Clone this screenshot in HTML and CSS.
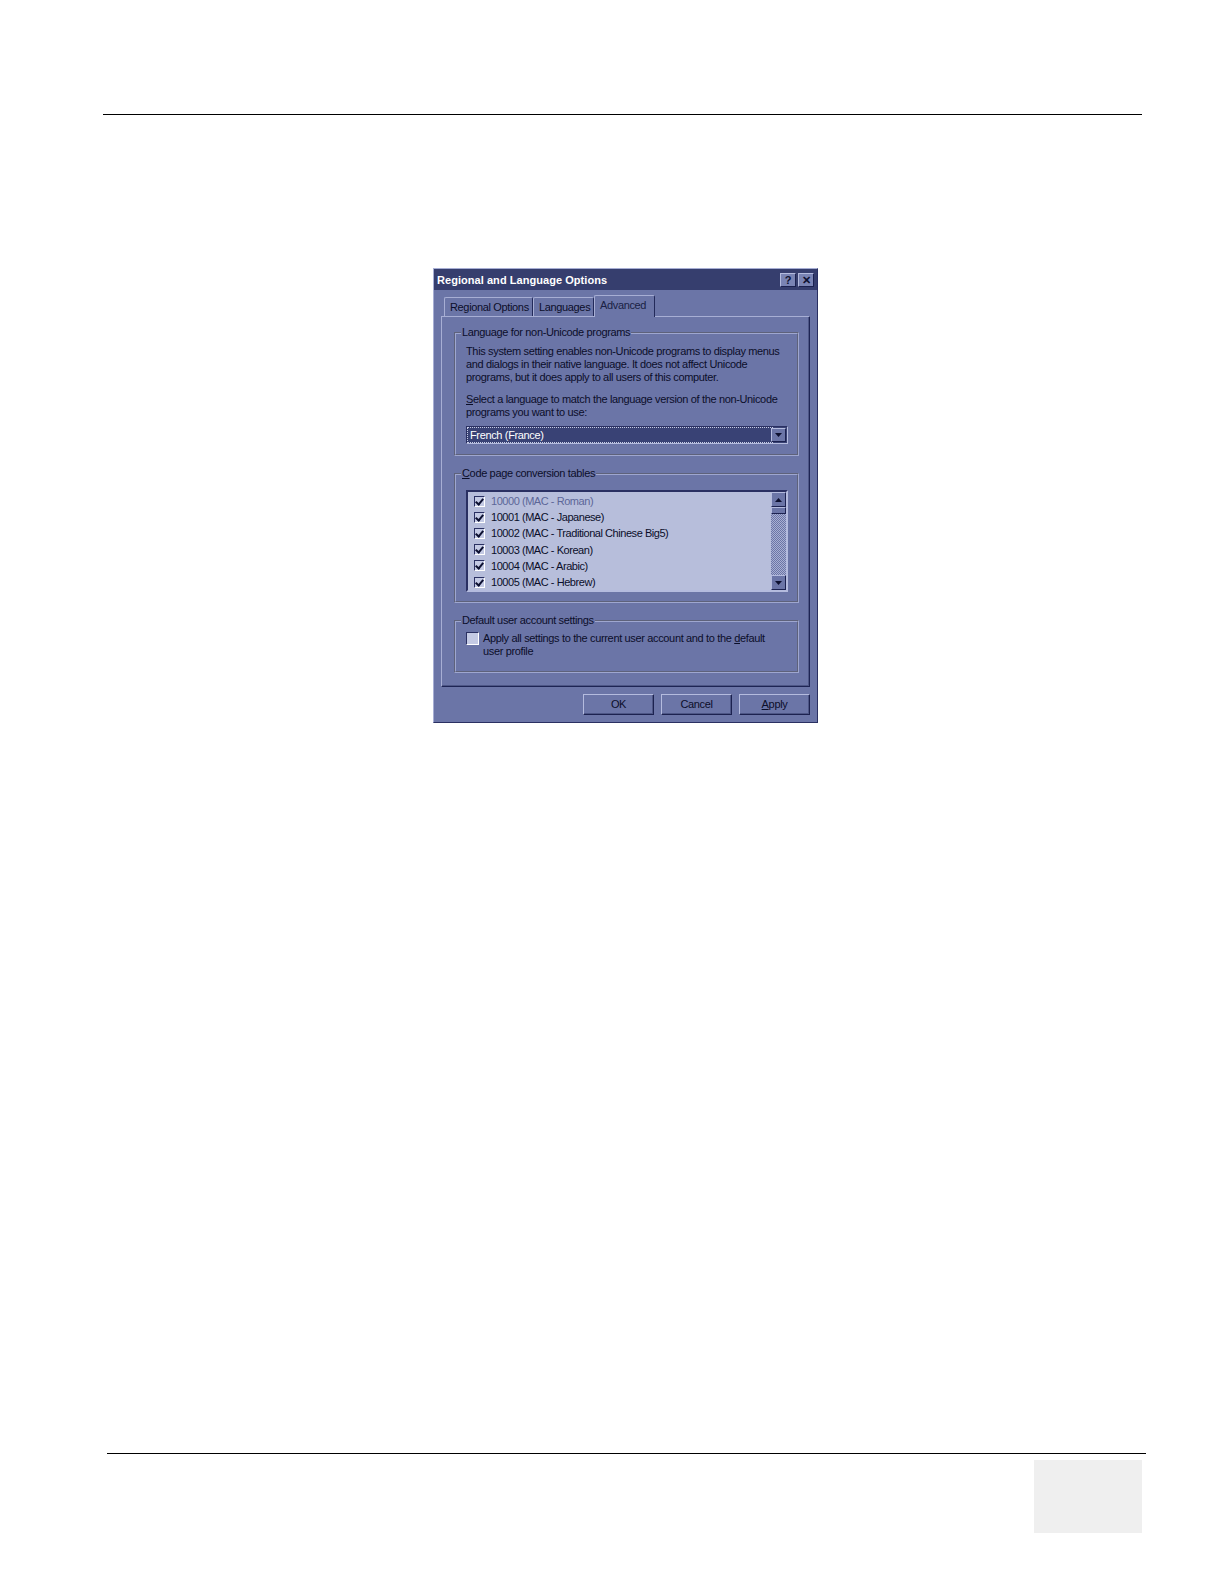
FILE: index.html
```html
<!DOCTYPE html>
<html lang="en">
<head>
    <meta charset="UTF-8">
    <title>Regional and Language Options</title>
    <link rel="stylesheet" href="styles.css">
</head>
<body>
    <div class="page">
        <div class="rule top-rule"></div>

        <!-- Dialog screenshot -->
        <div class="dialog">
            <div class="titlebar">
                <span class="title">Regional and Language Options</span>
                <div class="title-buttons">
                    <span class="tb-btn">?</span>
                    <span class="tb-btn">&#x2715;</span>
                </div>
            </div>

            <div class="tabs">
                <div class="tab tab-regional">Regional Options</div>
                <div class="tab tab-lang">Languages</div>
                <div class="tab tab-adv active">Advanced</div>
            </div>

            <div class="panel">
                <fieldset class="group group-lang">
                    <legend>Language for non-Unicode programs</legend>
                    <p>This system setting enables non-Unicode programs to display menus and dialogs in their native language. It does not affect Unicode programs, but it does apply to all users of this computer.</p>
                    <p class="second">Select a language to match the language version of the non-Unicode programs you want to use:</p>
                    <div class="combo">
                        <div class="combo-value"><span>French (France)</span></div>
                        <div class="combo-btn">
                            <svg width="7" height="4" viewBox="0 0 7 4"><path d="M0 0h7L3.5 4z" fill="#0d1030"/></svg>
                        </div>
                    </div>
                </fieldset>

                <fieldset class="group group-code">
                    <legend class="mnemonic">Code page conversion tables</legend>
                    <div class="list">
                        <div class="list-items">
                            <div class="item dim"><span class="check on"></span>10000 (MAC - Roman)</div>
                            <div class="item"><span class="check on"></span>10001 (MAC - Japanese)</div>
                            <div class="item"><span class="check on"></span>10002 (MAC - Traditional Chinese Big5)</div>
                            <div class="item"><span class="check on"></span>10003 (MAC - Korean)</div>
                            <div class="item"><span class="check on"></span>10004 (MAC - Arabic)</div>
                            <div class="item"><span class="check on"></span>10005 (MAC - Hebrew)</div>
                        </div>
                        <div class="scrollbar">
                            <div class="sb-btn">
                                <svg width="7" height="4" viewBox="0 0 7 4"><path d="M0 4h7L3.5 0z" fill="#0d1030"/></svg>
                            </div>
                            <div class="sb-thumb"></div>
                            <div class="sb-track"></div>
                            <div class="sb-btn">
                                <svg width="7" height="4" viewBox="0 0 7 4"><path d="M0 0h7L3.5 4z" fill="#0d1030"/></svg>
                            </div>
                        </div>
                    </div>
                </fieldset>

                <fieldset class="group group-user">
                    <legend>Default user account settings</legend>
                    <div class="apply-row">
                        <span class="check big"></span>
                        <div class="apply-text">
                            <div>Apply all settings to the current user account and to the <u>d</u>efault</div>
                            <div>user profile</div>
                        </div>
                    </div>
                </fieldset>
            </div>

            <div class="buttons">
                <div class="btn">OK</div>
                <div class="btn">Cancel</div>
                <div class="btn mnemonic">Apply</div>
            </div>
        </div>

        <div class="rule bottom-rule"></div>
        <div class="page-tab"></div>
    </div>
</body>
</html>
```

FILE: styles.css
```css
body, html {
    margin: 0;
    padding: 0;
    background: #ffffff;
    font-family: "Liberation Sans", Arial, sans-serif;
}
.page {
    padding-top: 114px;
}
.rule {
    height: 0;
    border-top: 1.5px solid #000000;
}
.top-rule {
    margin: 0 82px 0 103px;
}
.bottom-rule {
    margin: 730px 78px 0 107px;
}
.page-tab {
    width: 108px;
    height: 73px;
    margin: 6px 0 0 1034px;
    background: #efefef;
}

/* dialog */
.dialog {
    box-sizing: border-box;
    width: 385px;
    height: 455px;
    margin: 153px 0 0 433px;
    background: #6b75a7;
    border: 1px solid;
    border-color: #a7aed4 #2a3062 #2a3062 #a7aed4;
    font-size: 11px;
    letter-spacing: -0.35px;
    color: #0b0e2a;
    display: flex;
    flex-direction: column;
}
.mnemonic::first-letter,
.second::first-letter {
    text-decoration: underline;
}
.titlebar {
    height: 21px;
    background: #363e6e;
    display: flex;
    align-items: center;
    justify-content: space-between;
    padding: 0 3px 0 3px;
}
.title {
    color: #ffffff;
    font-weight: bold;
    font-size: 11px;
    letter-spacing: 0.05px;
}
.title-buttons {
    display: flex;
    gap: 2px;
}
.tb-btn {
    box-sizing: border-box;
    width: 16px;
    height: 14px;
    background: #7a84b4;
    border: 1px solid;
    border-color: #b4bbde #1c2250 #1c2250 #b4bbde;
    font-size: 11px;
    font-weight: bold;
    letter-spacing: 0;
    line-height: 12px;
    text-align: center;
    color: #0d1030;
}

/* tabs */
.tabs {
    height: 26px;
    box-sizing: border-box;
    padding: 0 0 0 10px;
    display: flex;
    align-items: flex-end;
}
.tab {
    box-sizing: border-box;
    height: 19px;
    padding: 0 5px;
    line-height: 18px;
    border: 1px solid;
    border-bottom: none;
    border-color: #a7aed4 #232a5a #232a5a #a7aed4;
    border-radius: 2px 2px 0 0;
    white-space: nowrap;
    overflow: hidden;
}
.tab-regional { width: 89px; }
.tab-lang { width: 61px; }
.tab-adv { width: 61px; }
.tab.active {
    height: 22px;
    margin-bottom: -1px;
    background: #6b75a7;
    position: relative;
    padding-top: 1px;
    z-index: 1;
    line-height: 17px;
    color: #1a1f44;
}

/* panel */
.panel {
    box-sizing: border-box;
    width: 369px;
    height: 371px;
    margin-left: 7px;
    padding: 9px 10px 0 12px;
    border: 1px solid;
    border-color: #a7aed4 #1d2454 #1d2454 #a7aed4;
    box-shadow: inset -1px -1px 0 #4d5686;
}
.group {
    margin: 0;
    padding: 0 9px 0 10px;
    border: 2px groove #9ea6cf;
    min-width: 0;
}
.group legend {
    padding: 0 1px;
    margin-left: -5px;
    line-height: 13px;
    white-space: nowrap;
}
.group p {
    margin: 0;
    line-height: 13px;
}
.group-lang {
    padding-top: 6px;
    padding-bottom: 10px;
}
.group-lang .second {
    margin-top: 9px;
}
.group-code {
    margin-top: 11px;
    padding-top: 10px;
    padding-bottom: 9px;
}
.group-user {
    margin-top: 11px;
    padding-top: 5px;
    padding-bottom: 13px;
}

/* combo box */
.combo {
    box-sizing: border-box;
    height: 18px;
    margin-top: 7px;
    display: flex;
    border: 1px solid;
    border-color: #2a3062 #b4bbde #b4bbde #2a3062;
    background: #394275;
    padding: 1px;
}
.combo-value {
    flex: 1;
    display: flex;
    align-items: center;
    padding-left: 1px;
}
.combo-value span {
    flex: 1;
    color: #ffffff;
    line-height: 12px;
    outline: 1px dotted #c8cde6;
    outline-offset: 1px;
    padding-left: 1px;
}
.combo-btn {
    width: 15px;
    background: #6b75a7;
    border: 1px solid;
    border-color: #b4bbde #1c2250 #1c2250 #b4bbde;
    box-sizing: border-box;
    display: flex;
    align-items: center;
    justify-content: center;
}

/* list */
.list {
    box-sizing: border-box;
    height: 102px;
    display: flex;
    border: 2px solid;
    border-color: #2a3062 #b4bbde #b4bbde #2a3062;
    background: #b7bedb;
}
.list-items {
    flex: 1;
    padding: 1px 0 0 6px;
    overflow: hidden;
}
.item {
    height: 16.2px;
    display: flex;
    align-items: center;
    gap: 6px;
    white-space: nowrap;
    letter-spacing: -0.45px;
}
.item.dim {
    color: #5c6698;
}
.check {
    box-sizing: border-box;
    width: 11px;
    height: 11px;
    background: #c4cae4;
    border: 1px solid;
    border-color: #2a3062 #ffffff #ffffff #2a3062;
    position: relative;
    flex-shrink: 0;
}
.check.on::after {
    content: "";
    position: absolute;
    left: 2px;
    top: 0px;
    width: 3px;
    height: 6px;
    border: solid #0d1030;
    border-width: 0 2px 2px 0;
    transform: rotate(40deg);
}
.check.big {
    width: 13px;
    height: 13px;
}
.scrollbar {
    width: 15px;
    display: flex;
    flex-direction: column;
}
.sb-btn, .sb-thumb {
    box-sizing: border-box;
    background: #6b75a7;
    border: 1px solid;
    border-color: #b4bbde #1c2250 #1c2250 #b4bbde;
}
.sb-btn {
    height: 15px;
    display: flex;
    align-items: center;
    justify-content: center;
}
.sb-thumb {
    height: 7px;
}
.sb-track {
    flex: 1;
    background: repeating-conic-gradient(#6b75a7 0 25%, #a9b0d2 0 50%) 0 0 / 2px 2px;
}

/* user settings */
.apply-row {
    display: flex;
    gap: 4px;
}
.apply-text {
    line-height: 13px;
    white-space: nowrap;
}

/* dialog buttons */
.buttons {
    display: flex;
    justify-content: flex-end;
    gap: 7px;
    padding: 7px 7px 0 0;
}
.btn {
    box-sizing: border-box;
    width: 71px;
    height: 21px;
    text-align: center;
    line-height: 18px;
    border: 1px solid;
    border-color: #b4bbde #1c2250 #1c2250 #b4bbde;
    box-shadow: inset -1px -1px 0 #4d5686;
}
```
